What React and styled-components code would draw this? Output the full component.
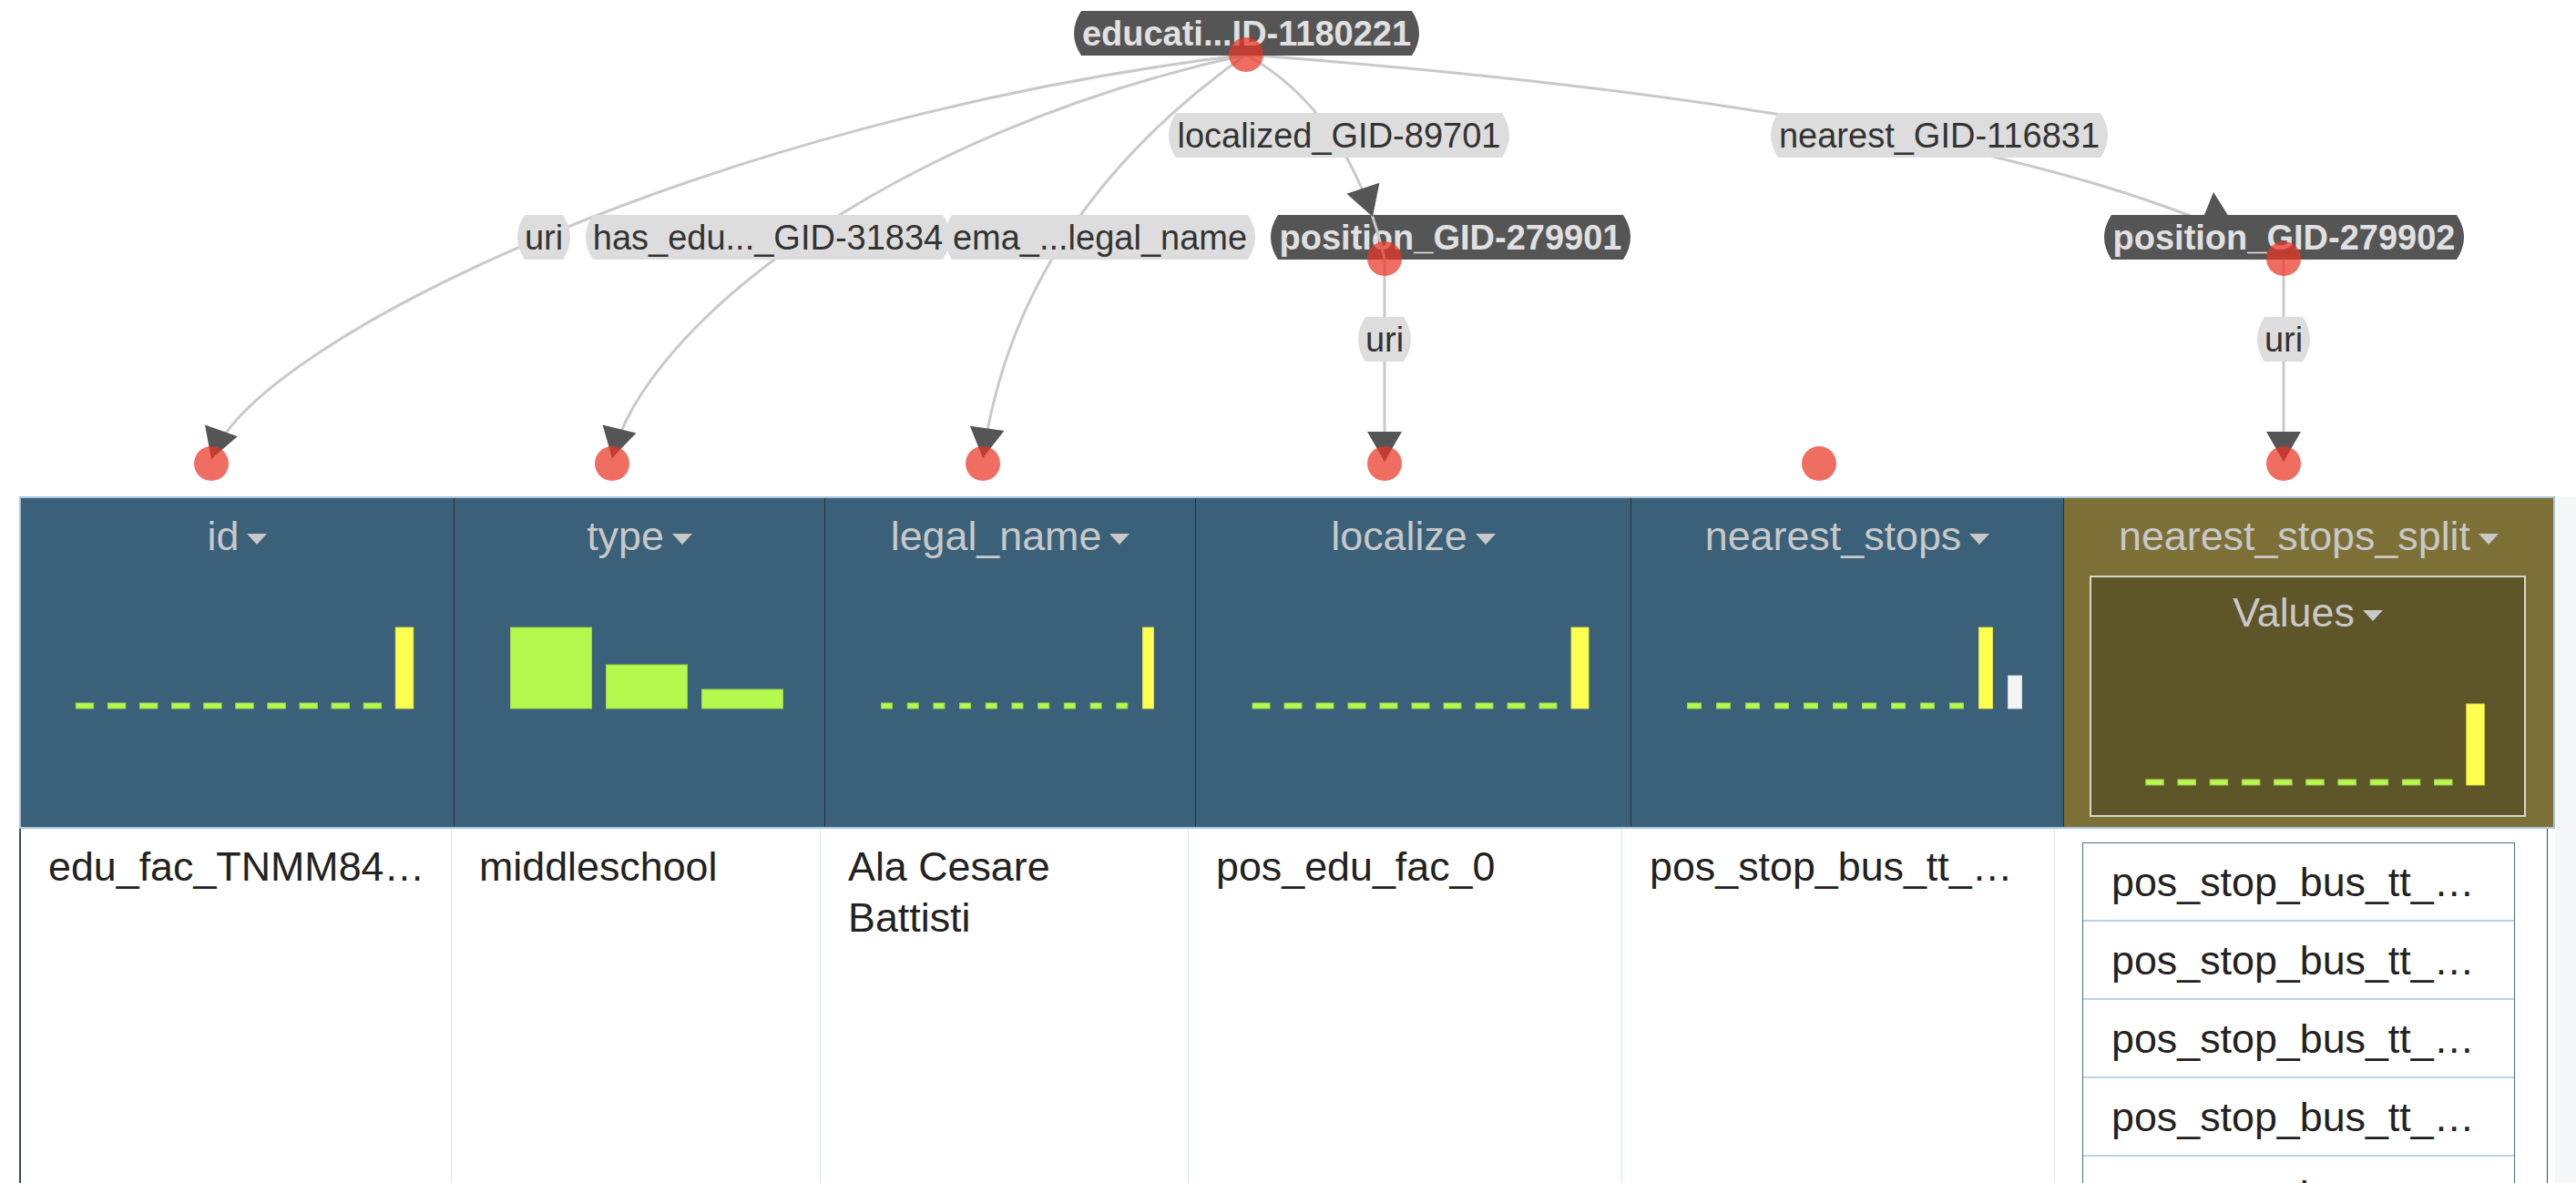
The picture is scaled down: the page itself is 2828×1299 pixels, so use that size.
import React from "react";
import styled, { createGlobalStyle } from "styled-components";

const GlobalStyle = createGlobalStyle`
  html, body { margin: 0; padding: 0; background: #ffffff; }
  body { font-family: "Liberation Sans", Arial, sans-serif; }
  * { box-sizing: border-box; }
`;

const Page = styled.div`
  width: 2828px;
  height: 1299px;
  overflow: hidden;
  background: #ffffff;
`;

/* ---------- graph (diagram canvas) ---------- */

const GraphCanvas = styled.svg`
  display: block;
  width: 2828px;
  height: 545px;
`;

const EdgeLine = styled.path`
  fill: none;
  stroke: #c9c9c9;
  stroke-width: 3;
`;

const ArrowHead = styled.polygon`
  fill: #555555;
`;

const EdgePill = styled.path`
  fill: #dddddd;
`;

const EdgeText = styled.text`
  font-family: "Liberation Sans", Arial, sans-serif;
  font-size: 38px;
  fill: #333333;
`;

const NodePill = styled.path`
  fill: #555555;
`;

const NodeText = styled.text`
  font-family: "Liberation Sans", Arial, sans-serif;
  font-size: 38px;
  font-weight: 700;
  fill: #e0e0e0;
`;

const Dot = styled.circle`
  fill: #ea3426;
  opacity: 0.72;
`;

const pillPath = (cx, cy, w, h, b = 8) => {
  const L = cx - w / 2;
  const R = cx + w / 2;
  const T = cy - h / 2;
  const B = cy + h / 2;
  return `M${L + b},${T} H${R - b} Q${R + b},${cy} ${R - b},${B} H${L + b} Q${L - b},${cy} ${L + b},${T} Z`;
};

const arrowPoints = (tx, ty, dx, dy, len = 33, hw = 19) => {
  const m = Math.hypot(dx, dy);
  const ux = dx / m;
  const uy = dy / m;
  const bx = tx - ux * len;
  const by = ty - uy * len;
  const px = -uy;
  const py = ux;
  return `${tx},${ty} ${bx + px * hw},${by + py * hw} ${bx - px * hw},${by - py * hw}`;
};

const edges = [
  { d: "M1368,60 C781.6,130.4 277.2,374.9 232,504", arrow: [232, 504, -45.2, 129.1] },
  { d: "M1368,60 C971.9,147.1 708.1,358.5 672,503", arrow: [672, 503, -36.1, 144.5] },
  { d: "M1368,60 Q1116.5,238.5 1079,503", arrow: [1079, 503, -37.5, 264.5] },
  { d: "M1368,60 Q1482,124 1520,284", arrow: [1507, 238, 0.321, 0.947] },
  { d: "M1520,284 L1520,507", arrow: [1520, 507, 0, 1] },
  { d: "M2507,284 L2507,507", arrow: [2507, 507, 0, 1] },
];

const edgeLabels = [
  { text: "uri", cx: 597, cy: 260.5, w: 58 },
  { text: "has_edu..._GID-31834", cx: 843, cy: 260.5, w: 400 },
  { text: "ema_...legal_name", cx: 1207.5, cy: 260.5, w: 341 },
  { text: "localized_GID-89701", cx: 1470, cy: 148.5, w: 374 },
  { text: "nearest_GID-116831", cx: 2129, cy: 148.5, w: 370 },
  { text: "uri", cx: 1520, cy: 372.5, w: 58 },
  { text: "uri", cx: 2507, cy: 372.5, w: 58 },
];

const dots = [
  [1368, 60],
  [1520, 284],
  [2507, 284],
  [232, 509],
  [672, 509],
  [1079, 509],
  [1520, 509],
  [1997, 509],
  [2507, 509],
];

function Node({ cx, cy, w, text }) {
  return (
    <g>
      <NodePill d={pillPath(cx, cy, w, 49)} />
      <NodeText x={cx} y={cy + 13.5} textAnchor="middle">
        {text}
      </NodeText>
    </g>
  );
}

function Graph() {
  return (
    <GraphCanvas viewBox="0 0 2828 545">
      <Node cx={1592.5} cy={260.5} w={395} text="position_GID-279901" />
      {edges.map((e, i) => (
        <EdgeLine key={"e" + i} d={e.d} />
      ))}
      <EdgeLine d="M1368,60 Q2216.5,124 2507,284" />
      <ArrowHead points="2430,211 2416,246 2452,246" />
      {edges.map((e, i) => (
        <ArrowHead key={"a" + i} points={arrowPoints(...e.arrow)} />
      ))}
      <Node cx={1368.5} cy={36.5} w={379} text="educati...ID-1180221" />
      <Node cx={2507.5} cy={260.5} w={395} text="position_GID-279902" />
      {edgeLabels.map((l, i) => (
        <g key={"l" + i}>
          <EdgePill d={pillPath(l.cx, l.cy, l.w, 49)} />
          <EdgeText x={l.cx} y={l.cy + 13.5} textAnchor="middle">
            {l.text}
          </EdgeText>
        </g>
      ))}
      {dots.map(([x, y], i) => (
        <Dot key={"d" + i} cx={x} cy={y} r={19} />
      ))}
    </GraphCanvas>
  );
}

/* ---------- table ---------- */

const TableArea = styled.div`
  display: flex;
  padding-left: 21px;
  height: 754px;
`;

const Table = styled.div`
  flex: none;
  width: 2784px;
  display: flex;
  flex-direction: column;
  background: #ffffff;
`;

const Gutter = styled.div`
  flex: 1;
  background: #f6f7f8;
`;

const HeaderRow = styled.div`
  display: grid;
  grid-template-columns: 476px 407px 407px 478px 475px 537px;
  background: #3b6079;
  border: 2px solid #a8c6da;
`;

const HeadCell = styled.div`
  display: flex;
  flex-direction: column;
  align-items: center;
  padding-top: 13px;
  background: ${(p) => (p.$nested ? "#7d7037" : "transparent")};
  border-right: ${(p) => (p.$last ? "none" : "1px solid #2a3036")};
`;

const Title = styled.div`
  font-size: 44.8px;
  line-height: 56px;
  color: #c8c8c8;
  white-space: nowrap;
`;

const Caret = styled.span`
  display: inline-block;
  width: 0;
  height: 0;
  border-left: 11px solid transparent;
  border-right: 11px solid transparent;
  border-top: 12px solid #c8c8c8;
  margin-left: 9px;
  vertical-align: middle;
`;

const ChartSvg = styled.svg`
  display: block;
  flex: none;
`;

const ValuesBox = styled.div`
  align-self: stretch;
  margin: 16px 30px 11px 28px;
  border: 2px solid #d6d6cf;
  background: #5e5529;
  padding-top: 10px;
  display: flex;
  flex-direction: column;
  align-items: center;
`;

const BodyRow = styled.div`
  flex: 1;
  width: 2776px;
  display: grid;
  grid-template-columns: 473px 405px 404px 476px 475px 540px;
  align-items: stretch;
  border-left: 2px solid #34495e;
  border-right: 1px solid #34495e;
`;

const Cell = styled.div`
  padding: ${(p) => (p.$list ? "15px 35px 0 30px" : "13px 30px")};
  font-size: 44.8px;
  line-height: 56px;
  color: #222222;
  white-space: ${(p) => (p.$wrap ? "normal" : "nowrap")};
  border-right: ${(p) => (p.$last ? "none" : "1px solid #d6e6ef")};
`;

const ValueList = styled.div`
  border: 1px solid #4b6c84;
  border-bottom: none;
`;

const ValueItem = styled.div`
  padding: 14px 31px;
  border-bottom: 2px solid #b9d3e5;
  white-space: nowrap;
`;

const GREEN = "#b5f84e";
const YELLOW = "#ffff50";
const WHITE = "#f4f4f4";

function Histogram({ width, bars, pitch, barWidth }) {
  const n = bars.length;
  const span = (n - 1) * pitch + barWidth;
  const start = width / 2 + 8 - span / 2;
  return (
    <ChartSvg width={width} height={195} viewBox={`0 0 ${width} 195`}>
      {bars.map((b, i) => (
        <rect
          key={i}
          x={start + i * pitch}
          y={162 - b.h}
          width={barWidth}
          height={b.h}
          fill={b.c}
          stroke={b.c === GREEN ? "#9fd34a" : b.c === YELLOW ? "#e0e04a" : "#dddddd"}
          strokeWidth={1}
        />
      ))}
    </ChartSvg>
  );
}

const flat = (n) => Array.from({ length: n }, () => ({ h: 6, c: GREEN }));
const spikeBars = [...flat(10), { h: 89, c: YELLOW }];

const columns = [
  { name: "id", width: 475, bars: spikeBars, pitch: 35.1, barWidth: 19.5 },
  {
    name: "type",
    width: 406,
    bars: [
      { h: 89, c: GREEN },
      { h: 48, c: GREEN },
      { h: 21, c: GREEN },
    ],
    pitch: 105,
    barWidth: 89,
  },
  { name: "legal_name", width: 406, bars: spikeBars, pitch: 28.7, barWidth: 12 },
  { name: "localize", width: 477, bars: spikeBars, pitch: 35, barWidth: 19 },
  {
    name: "nearest_stops",
    width: 474,
    bars: [...flat(10), { h: 89, c: YELLOW }, { h: 36, c: WHITE }],
    pitch: 32,
    barWidth: 15,
  },
];

const cells = [
  { text: "edu_fac_TNMM84…" },
  { text: "middleschool" },
  { text: "Ala Cesare Battisti", wrap: true },
  { text: "pos_edu_fac_0" },
  { text: "pos_stop_bus_tt_…" },
];

const splitValues = Array.from({ length: 6 }, () => "pos_stop_bus_tt_…");

export default function App() {
  return (
    <Page>
      <GlobalStyle />
      <Graph />
      <TableArea>
        <Table>
          <HeaderRow>
            {columns.map((col) => (
              <HeadCell key={col.name}>
                <Title>
                  {col.name}
                  <Caret />
                </Title>
                <Histogram width={col.width} bars={col.bars} pitch={col.pitch} barWidth={col.barWidth} />
              </HeadCell>
            ))}
            <HeadCell $nested $last>
              <Title>
                nearest_stops_split
                <Caret />
              </Title>
              <ValuesBox>
                <Title>
                  Values
                  <Caret />
                </Title>
                <Histogram width={475} bars={spikeBars} pitch={35.2} barWidth={19.5} />
              </ValuesBox>
            </HeadCell>
          </HeaderRow>
          <BodyRow>
            {cells.map((c, i) => (
              <Cell key={i} $wrap={c.wrap}>
                {c.text}
              </Cell>
            ))}
            <Cell $list $last>
              <ValueList>
                {splitValues.map((v, i) => (
                  <ValueItem key={i}>{v}</ValueItem>
                ))}
              </ValueList>
            </Cell>
          </BodyRow>
        </Table>
        <Gutter />
      </TableArea>
    </Page>
  );
}
